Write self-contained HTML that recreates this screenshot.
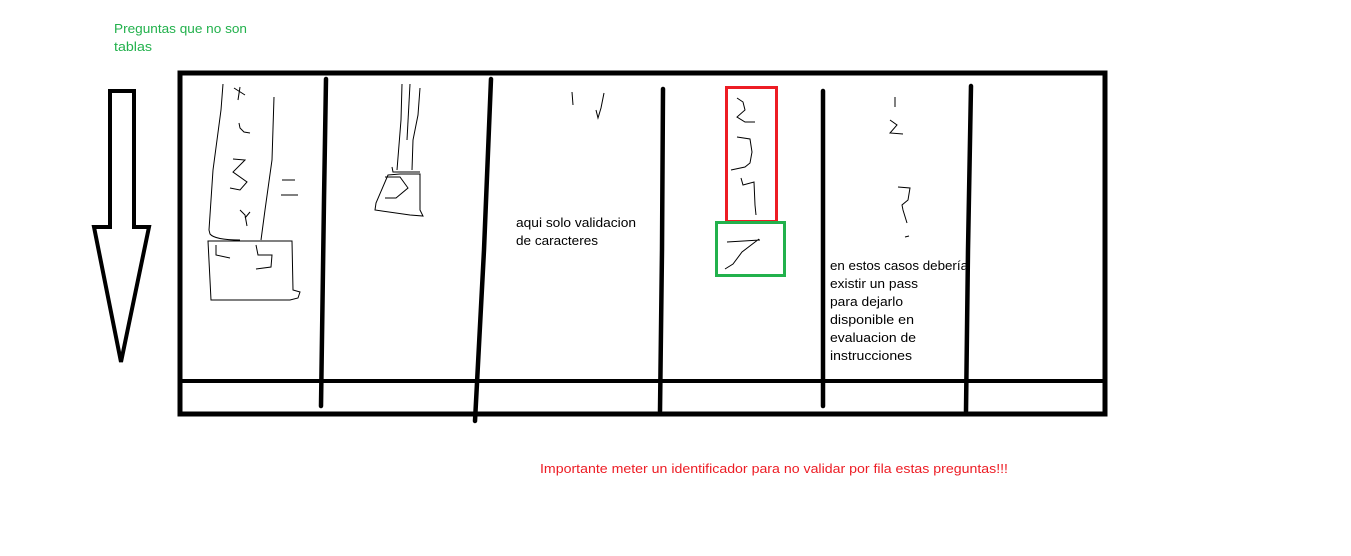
<!DOCTYPE html>
<html><head><meta charset="utf-8"><style>
html,body{margin:0;padding:0;background:#fff;width:1351px;height:556px;overflow:hidden}
svg{display:block}
text{font-family:"Liberation Sans",sans-serif;font-size:13px}
</style></head><body>
<svg width="1351" height="556" viewBox="0 0 1351 556" xmlns="http://www.w3.org/2000/svg">
<rect width="1351" height="556" fill="#fff"/>
<text x="114" y="33" fill="#22b14c" textLength="133" lengthAdjust="spacingAndGlyphs">Preguntas que no son</text>
<text x="114" y="51" fill="#22b14c" textLength="38" lengthAdjust="spacingAndGlyphs">tablas</text>
<path d="M110 91 H134 V227 H149 L121 362 L94 227 H110 Z" fill="none" stroke="#000" stroke-width="4" stroke-linejoin="miter"/>
<rect x="180" y="73" width="925" height="341" fill="none" stroke="#000" stroke-width="5"/>
<line x1="180" y1="381" x2="1105" y2="381" stroke="#000" stroke-width="4"/>
<g stroke="#000" stroke-width="4.5" stroke-linecap="round" fill="none">
<path d="M326 79 L324 200 L321 406"/>
<path d="M491 79 L484 250 L475 421"/>
<path d="M663 89 L662 250 L660 411"/>
<path d="M823 91 L823 406"/>
<path d="M971 86 L968 250 L966 411"/>
</g>
<g stroke="#000" stroke-width="1" fill="none">
<path d="M223 84 L221 110 L213 170 L209 230 L210 234 Q215 240 240 240"/>
<path d="M274 97 L272 160 L265 210 L261 240"/>
<path d="M234 88 L245 95 M240 87 L238 100"/>
<path d="M239 123 L240 128 L244 132 L250 133"/>
<path d="M233 159 L245 160 L233 172 L247 182 L240 190 L230 188"/>
<path d="M240 210 L245 215 L247 226 M245 218 L250 212"/>
<path d="M282 180 H295 M281 195 H298"/>
<path d="M208 241 H292 L293 290 L300 292 L298 298 L290 300 H211 Z"/>
<path d="M216 245 L216 255 L230 258 M256 245 L258 255 L272 255 L271 267 L256 269"/>
<path d="M402 84 L401 120 L397 170"/>
<path d="M410 84 L407 140"/>
<path d="M420 88 L418 115 L413 140 L412 170"/>
<path d="M392 167 L393 172 H420"/>
<path d="M388 175 L400 174 H420 L420 210 L423 216 L410 215 L375 210 L376 203 Z"/>
<path d="M385 177 H400 L408 188 L396 198 H385"/>
<path d="M572 92 L573 105 M604 93 L601 108 L598 118 L596 110"/>
<path d="M737 98 L743 102 L745 110 L737 117 L745 122 L755 122"/>
<path d="M737 137 L750 139 L752 152 L750 163 L745 167 L731 170"/>
<path d="M741 178 L743 185 L754 182 L755 205 L756 215"/>
<path d="M727 242 L760 240 M759 239 L742 252 L733 264 L725 269"/>
<path d="M895 97 V107 M890 120 L897 125 L890 133 L903 134"/>
<path d="M898 187 L910 188 L908 200 L902 205 L903 210 L907 223"/>
<path d="M905 237 L909 236"/>
</g>
<rect x="726.5" y="87.5" width="50" height="134" fill="none" stroke="#ed1c24" stroke-width="3"/>
<rect x="716.5" y="222.5" width="68" height="53" fill="none" stroke="#22b14c" stroke-width="3"/>
<g fill="#000">
<text x="516" y="227" textLength="120" lengthAdjust="spacingAndGlyphs">aqui solo validacion</text>
<text x="516" y="245" textLength="82" lengthAdjust="spacingAndGlyphs">de caracteres</text>
<text x="830" y="270" textLength="138" lengthAdjust="spacingAndGlyphs">en estos casos debería</text>
<text x="830" y="288" textLength="88" lengthAdjust="spacingAndGlyphs">existir un pass</text>
<text x="830" y="306" textLength="73" lengthAdjust="spacingAndGlyphs">para dejarlo</text>
<text x="830" y="324" textLength="84" lengthAdjust="spacingAndGlyphs">disponible en</text>
<text x="830" y="342" textLength="86" lengthAdjust="spacingAndGlyphs">evaluacion de</text>
<text x="830" y="360" textLength="82" lengthAdjust="spacingAndGlyphs">instrucciones</text>
</g>
<text x="540" y="473" fill="#ed1c24" textLength="468" lengthAdjust="spacingAndGlyphs">Importante meter un identificador para no validar por fila estas preguntas!!!</text>
</svg>
</body></html>
